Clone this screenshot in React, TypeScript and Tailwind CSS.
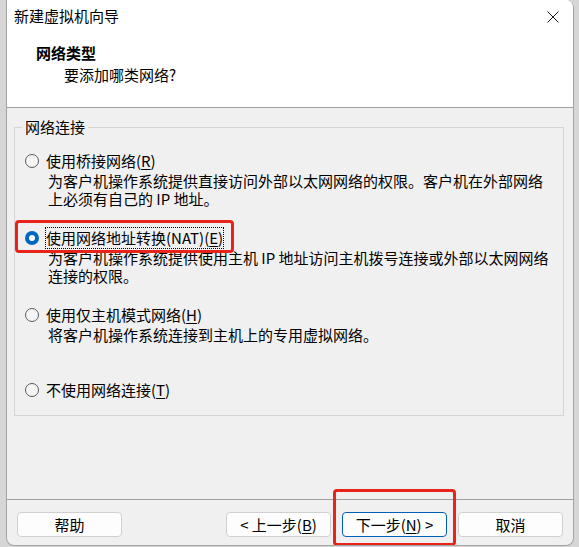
import React from 'react';

const Radio = ({ checked }: { checked?: boolean }) =>
  checked ? (
    <span className="flex h-[14px] w-[14px] shrink-0 items-center justify-center rounded-full bg-[#0067c0]">
      <span className="h-[6px] w-[6px] rounded-full bg-white" />
    </span>
  ) : (
    <span className="h-[14px] w-[14px] shrink-0 rounded-full border border-[#5c5c5c] bg-[#f5f5f5]" />
  );

const Key = ({ k }: { k: string }) => <span className="underline underline-offset-2">{k}</span>;

const Btn = ({ children, primary }: { children: React.ReactNode; primary?: boolean }) => (
  <button
    className={
      primary
        ? 'h-[25px] w-[105px] rounded-[4px] border border-[#005fb8] bg-[#fdfdfd] leading-[23px]'
        : 'h-[25px] w-[105px] rounded-[4px] border border-[#d0d0d0] bg-[#fdfdfd] leading-[23px]'
    }
  >
    {children}
  </button>
);

export default function App() {
  return (
    <div className="h-[547px] w-[579px] bg-[#d6d6d6] pl-[6px] font-['Noto_Sans_CJK_SC','Noto_Sans',sans-serif] text-[15px] text-black">
      <div className="flex h-[546px] w-[568px] flex-col overflow-hidden rounded-tr-[8px] rounded-b-[8px] border border-t-0 border-[#a3a3a3] bg-[#f0f0f0]">
        {/* header */}
        <div className="h-[108px] shrink-0 border-b border-[#a0a0a0] bg-white">
          <div className="flex h-[33px] items-center justify-between pl-[7px] pr-[14px]">
            <span>新建虚拟机向导</span>
            <svg width="12" height="12" viewBox="0 0 12 12" stroke="#1a1a1a" strokeWidth="1">
              <path d="M0.5 0.5 11.5 11.5M11.5 0.5 0.5 11.5" />
            </svg>
          </div>
          <div className="mt-[10px] pl-[29px] font-bold leading-[20px]">网络类型</div>
          <div className="mt-[2px] pl-[57px] leading-[20px]">要添加哪类网络?</div>
        </div>

        {/* body */}
        <div className="pl-[7px] pt-[9px]">
          <fieldset className="h-[299px] w-[550px] border border-[#d5d5d5]">
            <legend className="ml-[7px] px-[3px] leading-[20px]">网络连接</legend>
            <div className="pl-[10px] pt-[14px]">
              <div className="flex h-[20px] items-center gap-[7px] leading-[20px]">
                <Radio />
                <span>使用桥接网络(<Key k="R" />)</span>
              </div>
              <div className="mt-[1px] pl-[23px] leading-[18px]">
                <div>为客户机操作系统提供直接访问外部以太网网络的权限。客户机在外部网络</div>
                <div>上必须有自己的 IP 地址。</div>
              </div>

              <div className="relative mt-[20px] flex h-[20px] items-center gap-[7px] leading-[20px]">
                <div className="absolute left-[-10px] top-[-8px] h-[33px] w-[219px] rounded-[4px] border-[3px] border-[#e8231a]" />
                <Radio checked />
                <span className="outline-1 outline-offset-0 outline-dotted outline-black">
                  使用网络地址转换(NAT)(<Key k="E" />)
                </span>
              </div>
              <div className="mt-[1px] pl-[23px] leading-[18px]">
                <div>为客户机操作系统提供使用主机 IP 地址访问主机拨号连接或外部以太网网络</div>
                <div>连接的权限。</div>
              </div>

              <div className="mt-[20px] flex h-[20px] items-center gap-[7px] leading-[20px]">
                <Radio />
                <span>使用仅主机模式网络(<Key k="H" />)</span>
              </div>
              <div className="mt-[1px] pl-[23px] leading-[18px]">将客户机操作系统连接到主机上的专用虚拟网络。</div>

              <div className="mt-[36px] flex h-[20px] items-center gap-[7px] leading-[20px]">
                <Radio />
                <span>不使用网络连接(<Key k="T" />)</span>
              </div>
            </div>
          </fieldset>
        </div>

        {/* footer */}
        <div className="mt-auto flex h-[46px] shrink-0 items-start gap-[11px] border-t border-[#a0a0a0] px-[10px] pt-[12px]">
          <Btn>帮助</Btn>
          <div className="flex-1" />
          <Btn>&lt; 上一步(<Key k="B" />)</Btn>
          <div className="relative">
            <div className="absolute left-[-9px] top-[-23px] h-[57px] w-[123px] rounded-[4px] border-[3px] border-[#e8231a]" />
            <Btn primary>
              下一步(<Key k="N" />) &gt;
            </Btn>
          </div>
          <Btn>取消</Btn>
        </div>
      </div>
    </div>
  );
}
